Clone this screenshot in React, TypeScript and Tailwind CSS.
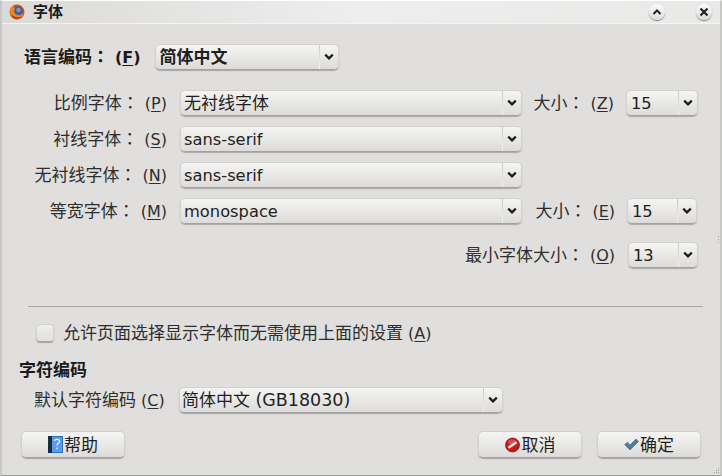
import React from "react";

const FONT = "font-['DejaVu_Sans','Noto_Sans_CJK_SC',sans-serif]";

function Chevron() {
  return (
    <svg width="10" height="8" viewBox="0 0 10 8" className="block">
      <path d="M1.2 1.6 L5 5.4 L8.8 1.6" fill="none" stroke="#1c1c1c" strokeWidth="2.2" />
    </svg>
  );
}

function Select({ children, w, bold, pad = "pl-[3px]" }: { children: React.ReactNode; w: string; bold?: boolean; pad?: string }) {
  return (
    <div
      className={`${w} h-[26px] shrink-0 flex items-center rounded-[5px] border border-[#d2d1cf] border-b-[#a3a2a0] bg-gradient-to-b from-[#f4f4f3] to-[#dddcda] shadow-[0_1px_1px_rgba(0,0,0,0.25)]`}
    >
      <span className={`flex-1 ${pad} text-[17px] leading-[24px] text-[#1f1f1f] whitespace-nowrap ${bold ? "font-bold" : ""}`}>{children}</span>
      <span className="w-px h-[24px] bg-gradient-to-b from-[#c8c7c5] to-[#f4f4f3]" />
      <span className="w-[18px] flex justify-center"><Chevron /></span>
    </div>
  );
}

function Latin({ children }: { children: React.ReactNode }) {
  return <span className="text-[16.3px]">{children}</span>;
}

function Label({ text, k, bold }: { text: string; k: string; bold?: boolean }) {
  return (
    <span className={`text-[17px] leading-[24px] whitespace-nowrap ${bold ? "font-bold text-[#1a1a1a]" : "text-[#2e2e2e]"}`}>
      {text}
      <span className="font-['Noto_Sans_CJK_TC',sans-serif]">：</span>
      <span className="ml-[6px] text-[16px]">(<span className="underline underline-offset-2">{k}</span>)</span>
    </span>
  );
}

function Row({ label, k, value, size, sizeKey, sizeLabelW = "w-[92px]", sizeW = "w-[72px]" }: { label: string; k: string; value: React.ReactNode; size?: string; sizeKey?: string; sizeLabelW?: string; sizeW?: string }) {
  return (
    <div className="flex items-center h-[26px]">
      <div className="w-[148px] shrink-0 flex justify-end"><Label text={label} k={k} /></div>
      <div className="w-[13px] shrink-0" />
      <Select w="w-[342px]">{value}</Select>
      {size && (
        <>
          <div className={`${sizeLabelW} shrink-0 flex justify-end`}><Label text="大小" k={sizeKey!} /></div>
          <div className="w-[12px] shrink-0" />
          <Select w={sizeW} pad="pl-[4px]"><Latin>{size}</Latin></Select>
        </>
      )}
    </div>
  );
}

function Button({ icon, label, w }: { icon: React.ReactNode; label: string; w: string }) {
  return (
    <div className={`${w} h-[27px] flex items-center justify-center gap-[1px] rounded-[5px] border border-[#d2d1cf] border-b-[#a3a2a0] bg-gradient-to-b from-[#f4f4f3] to-[#dddcda] shadow-[0_1px_1px_rgba(0,0,0,0.25)] text-[17px] leading-[24px] text-[#1f1f1f]`}>
      {icon}
      <span>{label}</span>
    </div>
  );
}

function Firefox() {
  return (
    <svg width="16" height="16" viewBox="0 0 16 16">
      <circle cx="8" cy="8" r="7.5" fill="#c9501c" />
      <circle cx="9" cy="7" r="4.6" fill="#3d5f9e" />
      <circle cx="9.5" cy="6" r="2.2" fill="#7d99c9" />
      <path d="M1 8 C1 4 3 2 5 1.5 C4 3 5 4 6 4.4 C4.5 6 5 10 8.5 11 C11 11.6 13 10.5 14 9 C14.5 12 11.5 15.5 8 15.5 C4 15.5 1 12 1 8 Z" fill="#e8862a" />
      <path d="M2 10 C2.5 13 5 15 8 15 C10 15 12 14 13 12.5 C10 14 5 13.5 2 10 Z" fill="#b93a16" />
    </svg>
  );
}

function RoundBtn({ children }: { children: React.ReactNode }) {
  return (
    <div className="w-[16px] h-[16px] rounded-full bg-gradient-to-b from-[#fbfbfb] to-[#dcdcdc] shadow-[0_1px_1px_rgba(0,0,0,0.45)] flex items-center justify-center">
      {children}
    </div>
  );
}

export default function App() {
  return (
    <div className={`${FONT} relative w-[722px] h-[476px] overflow-hidden bg-[#e0dfdd] flex flex-col border-l-2 border-r-2 border-t border-b border-t-[#ffffff] border-l-[#c8c8c6] border-r-[#c8c8c6] border-b-[#9c9c9a]`}>
      <div className="h-[23px] shrink-0 flex items-center pl-[7px] pr-[8px] bg-gradient-to-r from-[#dbdad8] via-[#eeeeee] to-[#e9e9e8] border-b border-[#f4f4f3]">
        <Firefox />
        <span className="ml-[8px] text-[15px] font-bold text-[#1d1d1d] leading-[20px]">字体</span>
        <div className="flex-1" />
        <RoundBtn>
          <svg width="10" height="8" viewBox="0 0 10 8"><path d="M1.5 6 L5 2.4 L8.5 6" fill="none" stroke="#222" strokeWidth="2" /></svg>
        </RoundBtn>
        <div className="w-[31px]" />
        <RoundBtn>
          <svg width="10" height="10" viewBox="0 0 10 10"><path d="M1.5 1.5 L8.5 8.5 M8.5 1.5 L1.5 8.5" fill="none" stroke="#222" strokeWidth="2.2" /></svg>
        </RoundBtn>
      </div>

      <div className="flex-1 flex flex-col pl-[17px] pr-[17px]">
        <div className="flex items-center h-[26px] mt-[20px] pl-[5px]">
          <Label text="语言编码" k="F" bold />
          <div className="w-[14px] shrink-0" />
          <Select w="w-[184px]" bold pad="pl-[4px]">简体中文</Select>
        </div>

        <div className="flex flex-col gap-[10px] mt-[20px]">
          <Row label="比例字体" k="P" value="无衬线字体" size="15" sizeKey="Z" />
          <Row label="衬线字体" k="S" value={<Latin>sans-serif</Latin>} />
          <Row label="无衬线字体" k="N" value={<Latin>sans-serif</Latin>} />
          <Row label="等宽字体" k="M" value={<Latin>monospace</Latin>} size="15" sizeKey="E" sizeLabelW="w-[93px]" sizeW="w-[70px]" />
        </div>

        <div className="flex items-center justify-end h-[26px] mt-[18px] pr-[5px]">
          <Label text="最小字体大小" k="O" />
          <div className="w-[13px] shrink-0" />
          <Select w="w-[70px]" pad="pl-[4px]"><Latin>13</Latin></Select>
        </div>

        <div className="h-px bg-[#a9a9a7] mt-[38px] ml-[9px] shrink-0" />

        <div className="flex items-center h-[24px] mt-[14px] ml-[17px]">
          <div className="w-[18px] h-[18px] rounded-[4px] border border-[#d2d1cf] border-b-[#a3a2a0] bg-gradient-to-b from-[#eeeeed] to-[#e2e1df] shadow-[0_1px_1px_rgba(0,0,0,0.25)]" />
          <span className="ml-[9px] text-[17px] leading-[24px] text-[#2e2e2e] whitespace-nowrap">允许页面选择显示字体而无需使用上面的设置<span className="text-[16px]"> (<span className="underline underline-offset-2">A</span>)</span></span>
        </div>

        <div className="text-[17px] leading-[24px] font-bold text-[#1a1a1a] mt-[13px] whitespace-nowrap">字符编码</div>

        <div className="flex items-center h-[26px] mt-[5px] ml-[15px]">
          <span className="text-[17px] leading-[24px] whitespace-nowrap text-[#2e2e2e] w-[132px] shrink-0">默认字符编码<span className="text-[16px]"> (<span className="underline underline-offset-2">C</span>)</span></span>
          <div className="w-[13px] shrink-0" />
          <Select w="w-[324px]" pad="pl-[2px]">简体中文 <span className="text-[17.5px]">(GB18030)</span></Select>
        </div>

        <div className="flex items-center mt-[18px] pl-[2px] pr-[2px]">
          <Button
            w="w-[104px]"
            label="帮助"
            icon={
              <svg width="15" height="17" viewBox="0 0 15 17">
                <rect x="0" y="0" width="15" height="17" fill="#2f6fc0" />
                <rect x="0" y="0" width="4" height="17" fill="#1a2c44" />
                <rect x="4" y="1" width="10" height="15" fill="#5b9be6" />
                <path d="M6.5 5 C6.5 2.8 11.5 2.8 11.5 5.2 C11.5 7.2 9 7.4 9 9.6 M9 11.4 V13.2" fill="none" stroke="#eef5ff" strokeWidth="1.2" />
              </svg>
            }
          />
          <div className="flex-1" />
          <Button
            w="w-[104px]"
            label="取消"
            icon={
              <svg width="16" height="16" viewBox="0 0 16 16">
                <circle cx="7.5" cy="8" r="7" fill="#bf1d1d" stroke="#8e1414" strokeWidth="0.8" />
                <ellipse cx="7" cy="5" rx="4" ry="2.4" fill="#d94a4a" />
                <path d="M3.4 10.8 L11.6 5.2" stroke="#f6e4e4" strokeWidth="2.6" />
              </svg>
            }
          />
          <div className="w-[15px] shrink-0" />
          <Button
            w="w-[104px]"
            label="确定"
            icon={
              <svg width="15" height="13" viewBox="0 0 15 13">
                <path d="M0.6 6.5 L3.6 4.2 L6 7 L12 1 L14.5 3.5 L6 12 Z" fill="#54789f" stroke="#40638a" strokeWidth="0.6" />
              </svg>
            }
          />
        </div>
      </div>

      <svg width="8" height="8" viewBox="0 0 8 8" className="absolute right-0 bottom-0">
        <g fill="#9c9c9a"><rect x="6" y="1" width="1" height="1" /><rect x="4" y="3" width="1" height="1" /><rect x="6" y="3" width="1" height="1" /><rect x="2" y="5" width="1" height="1" /><rect x="4" y="5" width="1" height="1" /><rect x="6" y="5" width="1" height="1" /></g>
      </svg>
      <svg width="2" height="8" viewBox="0 0 2 8" className="absolute right-0 top-[235px]">
        <g fill="#a9a9a7"><rect y="0" width="1" height="1" /><rect y="3" width="1" height="1" /><rect y="6" width="1" height="1" /></g>
      </svg>
    </div>
  );
}
